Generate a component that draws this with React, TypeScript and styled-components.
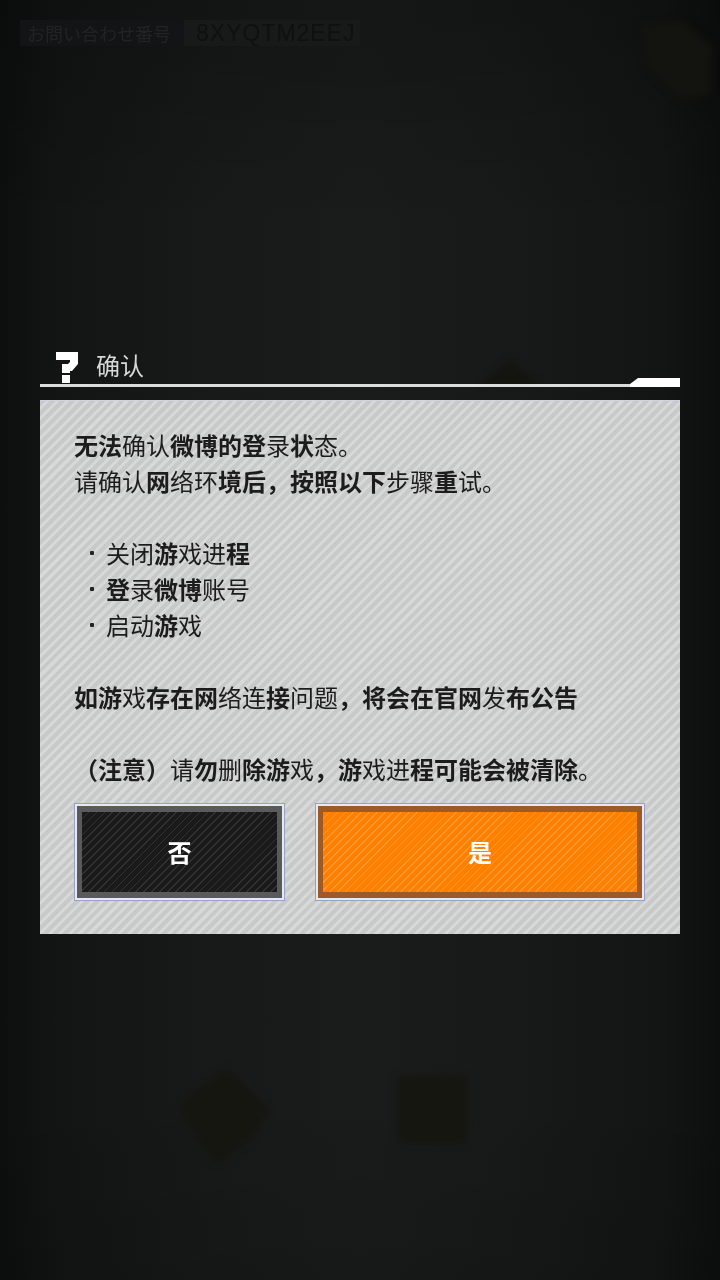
import React from "react";
import styled, { createGlobalStyle } from "styled-components";

const Global = createGlobalStyle`
  html, body { margin: 0; padding: 0; width: 720px; height: 1280px; overflow: hidden; background: #111; }
`;

const Screen = styled.div`
  position: relative;
  width: 720px;
  height: 1280px;
  overflow: hidden;
  display: flex;
  flex-direction: column;
  font-family: "Noto Sans CJK SC", "Noto Sans", sans-serif;
  background:
    linear-gradient(180deg, rgba(0, 0, 0, 0.22) 0%, rgba(0, 0, 0, 0) 18%, rgba(0, 0, 0, 0) 85%, rgba(0, 0, 0, 0.12) 100%),
    linear-gradient(90deg, #0d0e0e 0%, #131414 8%, #181a1a 30%, #1a1c1c 50%, #181a1a 70%, #131414 92%, #0d0e0e 100%);
  filter: blur(0.45px);
`;

const SupportRow = styled.div`
  position: relative;
  display: flex;
  align-items: center;
  height: 26px;
  margin: 20px 0 0 20px;
`;

const SupportLabel = styled.div`
  height: 26px;
  width: 164px;
  padding-left: 7px;
  box-sizing: border-box;
  border-radius: 0 13px 13px 0;
  background: #131415;
  color: #212324;
  font-size: 18px;
  line-height: 26px;
  white-space: nowrap;
`;

const SupportCode = styled.div`
  height: 26px;
  padding: 0 4px 0 12px;
  background: #181a1a;
  color: #0f1010;
  font-family: "Liberation Sans", sans-serif;
  font-size: 23px;
  line-height: 27px;
  letter-spacing: 1px;
`;

const Ghost = styled.svg`
  position: absolute;
  left: 0;
  top: 0;
  filter: blur(3px);
`;

const Dialog = styled.div`
  position: relative;
  width: 640px;
  margin: 304px 0 0 40px;
  display: flex;
  flex-direction: column;
`;

const Header = styled.div`
  position: relative;
  height: 34px;
  display: flex;
  align-items: flex-start;
  gap: 16px;
  padding-left: 16px;
  border-bottom: 3px solid #dcdcdc;
`;

const Tab = styled.div`
  position: absolute;
  right: 0;
  bottom: -3px;
  width: 50px;
  height: 9px;
  background: #ffffff;
  clip-path: polygon(8px 0, 100% 0, 100% 100%, 0 100%, 0 6px);
`;

const HeaderTitle = styled.div`
  color: #d8d8d8;
  font-size: 24px;
  line-height: 29px;
`;

const Panel = styled.div`
  margin-top: 13px;
  height: 534px;
  box-sizing: border-box;
  padding: 26px 34px 0;
  border-top: 1px solid #d0d4e0;
  color: #1c1c1c;
  font-size: 24px;
  line-height: 36px;
  background-color: #cfcfcf;
  background-image: repeating-linear-gradient(
    135deg,
    #c8c9c9 0,
    #c8c9c9 4px,
    #d8d8d8 4px,
    #d8d8d8 7px
  );
`;

const Line = styled.div`
  height: 36px;
  white-space: pre;
`;

const Gap = styled.div`
  height: 36px;
`;

const Bullet = styled.div`
  height: 36px;
  display: flex;
  align-items: center;
  padding-left: 16px;
  gap: 12px;
  white-space: pre;
  &::before {
    content: "";
    width: 4px;
    height: 4px;
    border-radius: 1px;
    background: #222;
  }
`;

const B = styled.b`
  font-weight: 700;
`;

const Buttons = styled.div`
  display: flex;
  gap: 30px;
  margin-top: 16px;
`;

const Btn = styled.div<{ $w: number; $edge: string; $s1: string; $s2: string }>`
  width: ${(p) => p.$w}px;
  height: 98px;
  box-sizing: border-box;
  border: 1px solid #9aa2c4;
  padding: 2px;
  background: #e6e8f2;
  display: flex;
  > div {
    flex: 1;
    display: flex;
    align-items: center;
    justify-content: center;
    border-style: solid;
    border-color: ${(p) => p.$edge};
    border-width: 6px 5px;
    color: #fff;
    font-size: 24px;
    font-weight: 700;
    background-color: ${(p) => p.$s1};
    background-image: repeating-linear-gradient(
      135deg,
      ${(p) => p.$s1} 0,
      ${(p) => p.$s1} 4.4px,
      ${(p) => p.$s2} 4.4px,
      ${(p) => p.$s2} 5.6px
    );
  }
`;

export default function App() {
  return (
    <Screen>
      <Global />
      <Ghost width="720" height="1280" viewBox="0 0 720 1280">
        <path d="M640 25 L680 20 L712 45 L712 95 L680 100 L645 65 Z" fill="#13130f" />
        <path d="M510 360 L540 385 L480 385 Z" fill="#15150f" />
        <path d="M190 1095 L228 1068 L270 1110 L250 1140 L215 1165 L180 1110 Z" fill="#161610" />
        <path d="M398 1076 H466 V1143 H398 Z" fill="#161610" />
      </Ghost>
      <SupportRow>
        <SupportLabel>お問い合わせ番号</SupportLabel>
        <SupportCode>8XYQTM2EEJ</SupportCode>
      </SupportRow>
      <Dialog>
        <Header>
          <svg width="24" height="34" viewBox="0 0 24 34">
            <path d="M0 2H22V14L16 21H14V23H6V14H12L14 12V10H0Z M6 25H14V33H6Z" fill="#fff" />
          </svg>
          <HeaderTitle>确认</HeaderTitle>
          <Tab />
        </Header>
        <Panel>
          <Line><B>无法</B>确认<B>微博的登</B>录<B>状</B>态。</Line>
          <Line>请确认<B>网</B>络环<B>境后，按照以下</B>步骤<B>重</B>试。</Line>
          <Gap />
          <Bullet><span>关闭<B>游</B>戏进<B>程</B></span></Bullet>
          <Bullet><span><B>登</B>录<B>微博</B>账号</span></Bullet>
          <Bullet><span>启动<B>游</B>戏</span></Bullet>
          <Gap />
          <Line><B>如游</B>戏<B>存在网</B>络连<B>接</B>问题<B>，将会在官网</B>发<B>布公告</B></Line>
          <Gap />
          <Line><B>（注意）</B>请<B>勿</B>删<B>除游</B>戏<B>，游</B>戏进<B>程可能会被清除</B>。</Line>
          <Buttons>
            <Btn $w={211} $edge="#5a5a5a" $s1="#1a1a1a" $s2="#323232"><div>否</div></Btn>
            <Btn $w={330} $edge="#9c5a28" $s1="#ff7f00" $s2="#ff9a30"><div>是</div></Btn>
          </Buttons>
        </Panel>
      </Dialog>
    </Screen>
  );
}
